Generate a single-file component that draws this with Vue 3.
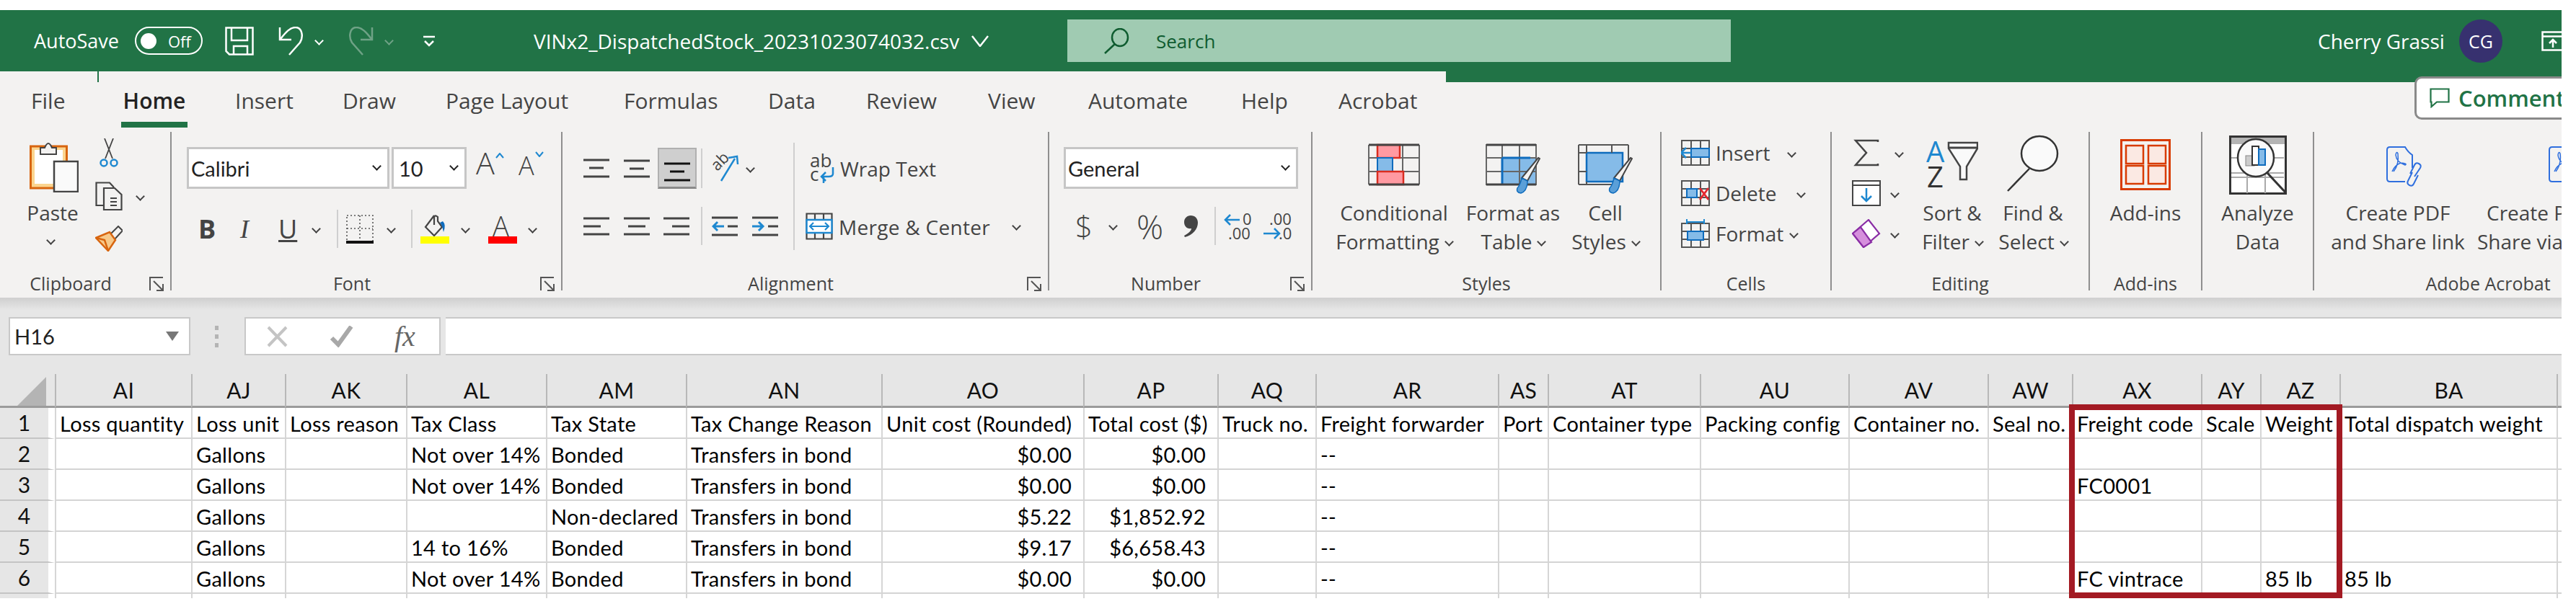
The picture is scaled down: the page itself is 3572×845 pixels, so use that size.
<script setup>
import { computed } from "vue";

const tabs = [
  { name: "File", w: 125 }, { name: "Home", w: 158 }, { name: "Insert", w: 149 }, { name: "Draw", w: 143 },
  { name: "Page Layout", w: 247 }, { name: "Formulas", w: 200 }, { name: "Data", w: 136 }, { name: "Review", w: 169 },
  { name: "View", w: 139 }, { name: "Automate", w: 212 }, { name: "Help", w: 135 }, { name: "Acrobat", w: 120 },
];

const columns = [
  { name: "AI", w: 189, title: "Loss quantity" },
  { name: "AJ", w: 130, title: "Loss unit" },
  { name: "AK", w: 168, title: "Loss reason" },
  { name: "AL", w: 194, title: "Tax Class" },
  { name: "AM", w: 194, title: "Tax State" },
  { name: "AN", w: 271, title: "Tax Change Reason" },
  { name: "AO", w: 280, title: "Unit cost (Rounded)", right: true },
  { name: "AP", w: 186, title: "Total cost ($)", right: true },
  { name: "AQ", w: 136, title: "Truck no." },
  { name: "AR", w: 253, title: "Freight forwarder" },
  { name: "AS", w: 69, title: "Port" },
  { name: "AT", w: 211, title: "Container type" },
  { name: "AU", w: 206, title: "Packing config" },
  { name: "AV", w: 193, title: "Container no." },
  { name: "AW", w: 117, title: "Seal no." },
  { name: "AX", w: 179, title: "Freight code" },
  { name: "AY", w: 82, title: "Scale" },
  { name: "AZ", w: 110, title: "Weight" },
  { name: "BA", w: 301, title: "Total dispatch weight" },
  { name: "", w: 7, title: "" },
];

const rows = [
  { AJ: "Gallons", AL: "Not over 14%", AM: "Bonded", AN: "Transfers in bond", AO: "$0.00", AP: "$0.00", AR: "--" },
  { AJ: "Gallons", AL: "Not over 14%", AM: "Bonded", AN: "Transfers in bond", AO: "$0.00", AP: "$0.00", AR: "--", AX: "FC0001" },
  { AJ: "Gallons", AM: "Non-declared", AN: "Transfers in bond", AO: "$5.22", AP: "$1,852.92", AR: "--" },
  { AJ: "Gallons", AL: "14 to 16%", AM: "Bonded", AN: "Transfers in bond", AO: "$9.17", AP: "$6,658.43", AR: "--" },
  { AJ: "Gallons", AL: "Not over 14%", AM: "Bonded", AN: "Transfers in bond", AO: "$0.00", AP: "$0.00", AR: "--", AX: "FC vintrace", AZ: "85 lb", BA: "85 lb" },
];

const gridColumns = computed(() => "76px " + columns.map((c) => c.w + "px").join(" "));
</script>

<template>
  <div class="window">
    <!-- title bar -->
    <div class="titlebar">
      <span class="t-auto">AutoSave</span>
      <div class="t-toggle-wrap">
        <div class="toggle"><i class="knob"></i><span>Off</span></div>
      </div>
      <svg class="t-save" width="40" height="40" viewBox="0 0 40 40" fill="none" stroke="#fff" stroke-width="2.5">
        <path d="M1.5 1.5H38.5V38.5H6L1.5 34Z" />
        <path d="M9 1.5V19H31V1.5M12 38V27H31V38" />
      </svg>
      <svg class="t-undo" width="36" height="40" viewBox="0 0 36 40" fill="none" stroke="#fff" stroke-width="2.5">
        <path d="M2 1V18H18" />
        <path d="M3 17C10 8 16 1 24 1C33 1 35 14 30 22L15 39" />
      </svg>
      <i class="chev light t-c1"></i>
      <svg class="t-redo" width="36" height="40" viewBox="0 0 36 40" fill="none" stroke="#6fa286" stroke-width="2.5">
        <path d="M34 1V18H18" />
        <path d="M33 17C26 8 20 1 12 1C3 1 1 14 6 22L21 39" />
      </svg>
      <i class="chev dim t-c2"></i>
      <svg class="t-custom" width="16" height="16" viewBox="0 0 16 16" fill="none" stroke="#fff" stroke-width="2.5">
        <path d="M0 2H16M2 8L8 14L14 8" />
      </svg>
      <span class="t-file">VINx2_DispatchedStock_20231023074032.csv</span>
      <svg class="t-filechev" width="24" height="16" viewBox="0 0 24 16" fill="none" stroke="#fff" stroke-width="2.5">
        <path d="M1 1L12 15L23 1" />
      </svg>
      <div class="search">
        <svg width="36" height="36" viewBox="0 0 36 36" fill="none" stroke="#0f5c30" stroke-width="2.5">
          <ellipse cx="23" cy="13" rx="11" ry="12" />
          <path d="M16 22L2 35" />
        </svg>
        <span>Search</span>
      </div>
      <span class="t-user">Cherry Grassi</span>
      <div class="avatar">CG</div>
      <svg class="t-share" width="40" height="28" viewBox="0 0 40 28" fill="none" stroke="#fff" stroke-width="2.5">
        <path d="M1.5 1.5H38.5V26.5H1.5ZM1.5 7.5H38.5" />
        <path d="M16 23V12M11 17L16 12L21 17" />
      </svg>
    </div>

    <!-- ribbon -->
    <div class="ribbon">
      <i class="notch-line"></i>
      <i class="notch"></i>
      <div class="comments">
        <svg width="28" height="28" viewBox="0 0 28 28" fill="none" stroke="#217346" stroke-width="2.2">
          <path d="M1.5 1.5H26.5V19.5H10L2.5 26V19.5H1.5Z" />
        </svg>
        <span>Comments</span>
      </div>

      <nav class="tabs">
        <div v-for="t in tabs" :key="t.name" class="tab" :style="{ width: t.w + 'px' }">
          <span :class="{ active: t.name === 'Home' }">{{ t.name }}</span>
        </div>
      </nav>

      <div class="groups">
        <!-- clipboard -->
        <section class="group g-clip">
          <div class="body clip-body">
            <div class="paste">
              <svg width="68" height="74" viewBox="0 0 68 74">
                <rect x="1.5" y="10" width="50" height="58" fill="#fbd58f" stroke="#d8650f" stroke-width="3" />
                <rect x="7" y="15" width="39" height="47" fill="#fff" />
                <path d="M15 21V12H21Q26 0 31 12H37V21Z" fill="#f3f2f1" stroke="#444" stroke-width="2" />
                <rect x="34" y="31" width="33" height="42" fill="#fafafa" stroke="#444" stroke-width="2.5" />
              </svg>
              <span class="btn-text">Paste</span>
              <i class="chev"></i>
            </div>
            <div class="clip-tools">
              <svg class="cut" width="28" height="40" viewBox="0 0 28 40" fill="none">
                <path d="M8 0L19 28M20 0L9 28" stroke="#444" stroke-width="1.8" />
                <circle cx="7" cy="34" r="4.5" stroke="#1e88d0" stroke-width="2.5" />
                <circle cx="21" cy="34" r="4.5" stroke="#1e88d0" stroke-width="2.5" />
              </svg>
              <div class="copy-row">
                <svg width="38" height="40" viewBox="0 0 38 40" fill="none" stroke="#444" stroke-width="2.2">
                  <path d="M14 33H1.5V1.5H20L26 8" />
                  <path d="M12 9H27L36.5 18V39H12Z" fill="#f3f2f1" />
                  <path d="M21 23H30M21 28H30M21 33H30" />
                </svg>
                <i class="chev"></i>
              </div>
              <svg class="painter" width="38" height="36" viewBox="0 0 38 36" fill="none">
                <path d="M20 13L32 1L38 7L26 20Z" fill="#f3f2f1" stroke="#444" stroke-width="2" />
                <path d="M1 17L20 9L28 20L18 35Z" fill="#f7c98a" stroke="#d8650f" stroke-width="2.5" />
                <path d="M1 17L13 20L18 35" stroke="#d8650f" stroke-width="2.5" />
              </svg>
            </div>
          </div>
          <footer class="foot launch">
            <span>Clipboard</span>
            <svg class="launcher" width="20" height="20" viewBox="0 0 20 20" fill="none" stroke="#555" stroke-width="2">
              <path d="M1 19V1H19M6 6L19 19M19 10V19H10" />
            </svg>
          </footer>
        </section>

        <!-- font -->
        <section class="group g-font">
          <div class="body">
            <div class="font-row1">
              <div class="combo name-combo"><span>Calibri</span><i class="chev dark"></i></div>
              <div class="combo size-combo"><span>10</span><i class="chev dark"></i></div>
              <div class="grow-a big-a">A<svg width="12" height="8" viewBox="0 0 12 8" fill="none" stroke="#1e88d0" stroke-width="2"><path d="M1 7L6 1L11 7" /></svg></div>
              <div class="grow-a small-a">A<svg width="12" height="8" viewBox="0 0 12 8" fill="none" stroke="#1e88d0" stroke-width="2"><path d="M1 1L6 7L11 1" /></svg></div>
            </div>
            <div class="font-row2">
              <b class="fmt">B</b>
              <i class="fmt fmt-i">I</i>
              <u class="fmt fmt-u">U</u>
              <i class="chev"></i>
              <i class="vsep"></i>
              <svg width="38" height="40" viewBox="0 0 38 40" fill="none">
                <path d="M1 1H37V37H1ZM19 1V37M1 19H37" stroke="#555" stroke-width="1.6" stroke-dasharray="2 3" />
                <path d="M0 38H38" stroke="#111" stroke-width="4" />
              </svg>
              <i class="chev"></i>
              <i class="vsep"></i>
              <div class="color-btn">
                <svg width="38" height="30" viewBox="0 0 38 30" fill="none">
                  <path d="M19 1L7 17L19 29L30 17L24 9V3Q19 -1 19 5V14" stroke="#444" stroke-width="2.2" />
                  <path d="M31 9Q36 14 32 24Q30 14 27 11Z" fill="#0f6cbd" />
                </svg>
                <i class="bar yellow"></i>
              </div>
              <i class="chev"></i>
              <div class="color-btn">
                <span class="a-letter">A</span>
                <i class="bar red"></i>
              </div>
              <i class="chev"></i>
            </div>
          </div>
          <footer class="foot launch">
            <span>Font</span>
            <svg class="launcher" width="20" height="20" viewBox="0 0 20 20" fill="none" stroke="#555" stroke-width="2">
              <path d="M1 19V1H19M6 6L19 19M19 10V19H10" />
            </svg>
          </footer>
        </section>

        <!-- alignment -->
        <section class="group g-align">
          <div class="body align-body">
            <div class="align-left">
              <div class="al-row1">
                <svg width="36" height="28" viewBox="0 0 36 28" stroke="#444" stroke-width="3"><path d="M0 2H36M8 13H28M0 25H36" /></svg>
                <svg width="36" height="28" viewBox="0 0 36 28" stroke="#444" stroke-width="3"><path d="M0 3H36M8 14H28M0 25H36" /></svg>
                <div class="al-selected">
                  <svg width="36" height="28" viewBox="0 0 36 28" stroke="#111" stroke-width="3"><path d="M0 2H36M8 13H28M0 25H36" /></svg>
                </div>
                <i class="vsep short"></i>
                <svg class="over" width="40" height="38" viewBox="0 0 40 38" fill="none">
                  <text x="3" y="18" class="svg-txt" transform="rotate(-45 12 14)">ab</text>
                  <path d="M14 36L33 5M24 4L36 2L37 13" stroke="#1e88d0" stroke-width="2.5" />
                </svg>
                <i class="chev"></i>
              </div>
              <div class="al-row2">
                <svg width="36" height="28" viewBox="0 0 36 28" stroke="#444" stroke-width="3"><path d="M0 3H36M0 14H24M0 25H36" /></svg>
                <svg width="36" height="28" viewBox="0 0 36 28" stroke="#444" stroke-width="3"><path d="M0 3H36M6 14H30M0 25H36" /></svg>
                <svg width="36" height="28" viewBox="0 0 36 28" stroke="#444" stroke-width="3"><path d="M0 3H36M12 14H36M0 25H36" /></svg>
                <i class="vsep"></i>
                <svg width="36" height="28" viewBox="0 0 36 28" fill="none" stroke-width="3">
                  <path d="M0 2H36M22 14H36M0 26H36" stroke="#444" />
                  <path d="M17 14H2M8 8L2 14L8 20" stroke="#1e88d0" />
                </svg>
                <svg width="36" height="28" viewBox="0 0 36 28" fill="none" stroke-width="3">
                  <path d="M0 2H36M22 14H36M0 26H36" stroke="#444" />
                  <path d="M0 14H15M9 8L15 14L9 20" stroke="#1e88d0" />
                </svg>
              </div>
            </div>
            <i class="align-sep"></i>
            <div class="align-right">
              <div class="wrap-btn">
                <svg class="over" width="36" height="44" viewBox="0 0 36 44" fill="none">
                  <text x="0" y="20" class="svg-txt big-txt">ab</text>
                  <text x="0" y="39" class="svg-txt big-txt">c</text>
                  <path d="M32 20V29Q32 33 26 33H17M22 27L16 33L22 39M19 33V42" stroke="#1e88d0" stroke-width="2.5" />
                </svg>
                <span class="btn-text">Wrap Text</span>
              </div>
              <div class="merge-btn">
                <svg width="38" height="38" viewBox="0 0 38 38" fill="none">
                  <path d="M1.5 1.5H36.5V36.5H1.5ZM13 1.5V10M25 1.5V10M13 28V36.5M25 28V36.5M1.5 10H36.5M1.5 28H36.5" stroke="#444" stroke-width="2.2" />
                  <rect x="1.5" y="10" width="35" height="18" fill="#fff" stroke="#1e88d0" stroke-width="2.5" />
                  <path d="M6 19H32M11 14L6 19L11 24M27 14L32 19L27 24" stroke="#1e88d0" stroke-width="2.2" />
                </svg>
                <span class="btn-text merge-text">Merge &amp; Center</span>
                <i class="chev"></i>
              </div>
            </div>
          </div>
          <footer class="foot launch">
            <span>Alignment</span>
            <svg class="launcher" width="20" height="20" viewBox="0 0 20 20" fill="none" stroke="#555" stroke-width="2">
              <path d="M1 19V1H19M6 6L19 19M19 10V19H10" />
            </svg>
          </footer>
        </section>

        <!-- number -->
        <section class="group g-number">
          <div class="body">
            <div class="combo general-combo"><span>General</span><i class="chev dark"></i></div>
            <div class="num-row">
              <span class="num-glyph dollar">$</span>
              <i class="chev"></i>
              <span class="num-glyph">%</span>
              <svg width="20" height="32" viewBox="0 0 20 32"><path d="M10 1C16 1 20 5 20 11C20 20 13 28 2 31L1 29C7 26 11 22 11 19C5 20 1 16 1 10C1 5 5 1 10 1Z" fill="#444" /></svg>
              <i class="vsep"></i>
              <svg class="over" width="40" height="38" viewBox="0 0 40 38">
                <text x="26" y="17" class="svg-txt">0</text>
                <text x="6" y="37" class="svg-txt">.00</text>
                <path d="M22 10H3M9 3L2 10L9 17" fill="none" stroke="#1e88d0" stroke-width="2.5" />
              </svg>
              <svg class="over" width="40" height="38" viewBox="0 0 40 38">
                <text x="8" y="17" class="svg-txt">.00</text>
                <text x="21" y="37" class="svg-txt">.0</text>
                <path d="M0 29H21M15 22L22 29L15 36" fill="none" stroke="#1e88d0" stroke-width="2.5" />
              </svg>
            </div>
          </div>
          <footer class="foot launch">
            <span>Number</span>
            <svg class="launcher" width="20" height="20" viewBox="0 0 20 20" fill="none" stroke="#555" stroke-width="2">
              <path d="M1 19V1H19M6 6L19 19M19 10V19H10" />
            </svg>
          </footer>
        </section>

        <!-- styles -->
        <section class="group g-styles">
          <div class="body big-row">
            <div class="big w-cond">
              <svg width="72" height="92" viewBox="0 0 72 92" fill="none">
                <path d="M1 18H71M1 73H71M1 18V73M71 18V73M24 18V73M48 18V73M1 36H71M1 55H71" stroke="#666" stroke-width="2" />
                <rect x="13" y="18" width="31" height="18" fill="#ff9aa2" stroke="#d92d20" stroke-width="2.5" />
                <rect x="13" y="36" width="21" height="19" fill="#85bbe8" stroke="#0f6cbd" stroke-width="2" />
                <rect x="13" y="55" width="36" height="18" fill="#ff9aa2" stroke="#d92d20" stroke-width="2.5" />
                <path d="M1 18H71M1 73H71" stroke="#444" stroke-width="3" />
              </svg>
              <span class="btn-text">Conditional</span>
              <span class="btn-text">Formatting<i class="chev tiny"></i></span>
            </div>
            <div class="big w-fmt">
              <svg width="76" height="92" viewBox="0 0 76 92" fill="none">
                <rect x="23" y="36" width="47" height="37" fill="#85bbe8" />
                <path d="M1 18H70V73H1ZM23 18V73M47 18V73M1 36H70M1 55H70" stroke="#666" stroke-width="2" />
                <path d="M23 36H62M23 36V73" stroke="#0f6cbd" stroke-width="3" />
                <path d="M1 18H70M1 73H70" stroke="#444" stroke-width="3" />
                <path d="M73 36L75 37L58 68L50 64Z" fill="#f3f2f1" stroke="#444" stroke-width="2" />
                <path d="M50 64L58 68Q58 82 49 85Q42 84 44 78Q48 74 50 64Z" fill="#5a9fd8" stroke="#0f6cbd" stroke-width="1.5" />
              </svg>
              <span class="btn-text">Format as</span>
              <span class="btn-text">Table<i class="chev tiny"></i></span>
            </div>
            <div class="big w-cell">
              <svg width="76" height="92" viewBox="0 0 76 92" fill="none">
                <rect x="12" y="29" width="50" height="40" fill="#85bbe8" stroke="#0f6cbd" stroke-width="2.5" />
                <path d="M1 18H70M1 18V73M1 73H50M12 18V29M47 18V29M1 29H12M1 55H12M12 69V73M70 18V40" stroke="#555" stroke-width="2" />
                <path d="M73 36L75 37L58 68L50 64Z" fill="#f3f2f1" stroke="#444" stroke-width="2" />
                <path d="M50 64L58 68Q58 82 49 85Q42 84 44 78Q48 74 50 64Z" fill="#5a9fd8" stroke="#0f6cbd" stroke-width="1.5" />
              </svg>
              <span class="btn-text">Cell</span>
              <span class="btn-text">Styles<i class="chev tiny"></i></span>
            </div>
          </div>
          <footer class="foot"><span>Styles</span></footer>
        </section>

        <!-- cells -->
        <section class="group g-cells">
          <div class="body cells-body">
            <div class="cell-btn">
              <svg width="40" height="36" viewBox="0 0 40 36" fill="none">
                <path d="M1 1H39V35H1ZM14 1V35M27 1V35M1 12H39M1 24H39" stroke="#555" stroke-width="2" />
                <rect x="14" y="12" width="25" height="12" fill="#85bbe8" stroke="#0f6cbd" stroke-width="2" />
                <path d="M14 18H1M7 11L0 18L7 25" stroke="#1e88d0" stroke-width="2.5" fill="#f3f2f1" />
              </svg>
              <span class="btn-text lb-insert">Insert</span><i class="chev"></i>
            </div>
            <div class="cell-btn">
              <svg width="40" height="36" viewBox="0 0 40 36" fill="none">
                <path d="M1 1H39V35H1ZM14 1V35M27 1V35M1 12H39M1 24H39" stroke="#555" stroke-width="2" />
                <rect x="8" y="12" width="14" height="12" fill="#85bbe8" stroke="#0f6cbd" stroke-width="2" />
                <path d="M26 11L38 27M38 11L26 27" stroke="#e5262e" stroke-width="2.8" />
              </svg>
              <span class="btn-text lb-delete">Delete</span><i class="chev"></i>
            </div>
            <div class="cell-btn">
              <svg width="40" height="40" viewBox="0 0 40 40" fill="none">
                <path d="M1 6H39V39H1ZM14 6V39M27 6V39M1 17H39M1 28H39" stroke="#555" stroke-width="2" />
                <rect x="9" y="17" width="22" height="12" fill="#85bbe8" stroke="#0f6cbd" stroke-width="2" />
                <path d="M8 4H32M8 0V7M32 0V7" stroke="#1e88d0" stroke-width="2" />
              </svg>
              <span class="btn-text lb-format">Format</span><i class="chev"></i>
            </div>
          </div>
          <footer class="foot"><span>Cells</span></footer>
        </section>

        <!-- editing -->
        <section class="group g-edit">
          <div class="body big-row">
            <div class="edit-left">
              <div class="edit-tool">
                <svg width="40" height="38" viewBox="0 0 40 38" fill="none" stroke="#444" stroke-width="2.5">
                  <path d="M36 4V2H5L20 19L5 36H36V34" />
                </svg>
                <i class="chev sum"></i>
              </div>
              <div class="edit-tool">
                <svg width="40" height="36" viewBox="0 0 40 36" fill="none">
                  <rect x="1" y="1" width="38" height="34" fill="#fff" stroke="#444" stroke-width="2" />
                  <path d="M1 7H39" stroke="#444" stroke-width="2" />
                  <path d="M20 11V29M13 22L20 29L27 22" stroke="#1e88d0" stroke-width="2.5" />
                </svg>
                <i class="chev"></i>
              </div>
              <div class="edit-tool">
                <svg width="40" height="40" viewBox="0 0 40 40" fill="none">
                  <path d="M23 1L38 20L16 39L1 20Z" fill="#fff" stroke="#8a2da5" stroke-width="2.2" />
                  <path d="M1 20L12 11L27 32L16 39Z" fill="#d58fdc" stroke="#8a2da5" stroke-width="2.2" />
                </svg>
                <i class="chev"></i>
              </div>
            </div>
            <div class="big w-sort">
              <svg width="72" height="92" viewBox="0 0 72 92" fill="none">
                <text x="0" y="42" class="az blue">A</text>
                <text x="1" y="77" class="az">Z</text>
                <path d="M31 15H71V23L56 48V66H47V48L31 23Z" fill="#fafafa" stroke="#444" stroke-width="2.5" />
                <path d="M31 22H71" stroke="#444" stroke-width="3" />
              </svg>
              <span class="btn-text">Sort &amp;</span>
              <span class="btn-text">Filter<i class="chev tiny"></i></span>
            </div>
            <div class="big w-find">
              <svg width="74" height="92" viewBox="0 0 74 92" fill="none" stroke="#333" stroke-width="2.5">
                <ellipse cx="46" cy="30" rx="25" ry="24" fill="#fafafa" />
                <path d="M32 51L2 82" />
              </svg>
              <span class="btn-text">Find &amp;</span>
              <span class="btn-text">Select<i class="chev tiny"></i></span>
            </div>
          </div>
          <footer class="foot"><span>Editing</span></footer>
        </section>

        <!-- add-ins -->
        <section class="group g-addins">
          <div class="body big-row">
            <div class="big w-full">
              <svg width="70" height="92" viewBox="0 0 70 92" fill="none" stroke="#d83b01">
                <rect x="1.5" y="11.5" width="67" height="68" stroke-width="3" />
                <rect x="8" y="19" width="24" height="25" stroke-width="2.5" fill="#fbe9e3" />
                <rect x="39" y="19" width="24" height="25" stroke-width="2.5" fill="#fbe9e3" />
                <rect x="8" y="47" width="24" height="25" stroke-width="2.5" fill="#fbe9e3" />
                <rect x="39" y="47" width="24" height="25" stroke-width="2.5" fill="#fbe9e3" />
              </svg>
              <span class="btn-text">Add-ins</span>
            </div>
          </div>
          <footer class="foot"><span>Add-ins</span></footer>
        </section>

        <!-- analyze -->
        <section class="group g-analyze">
          <div class="body big-row">
            <div class="big w-full">
              <svg width="80" height="92" viewBox="0 0 80 92" fill="none">
                <rect x="1.5" y="6.5" width="77" height="79" fill="#fff" stroke="#333" stroke-width="3" />
                <rect x="3" y="8" width="74" height="9" fill="#b5b5b5" />
                <path d="M3 36H76M3 57H76M3 63H76M25 57V85M50 57V85" stroke="#aaa" stroke-width="2" />
                <ellipse cx="37" cy="36" rx="25" ry="26" fill="#fafafa" stroke="#333" stroke-width="2.5" />
                <rect x="23" y="33" width="12" height="14" fill="#ccc" stroke="#888" />
                <rect x="32" y="20" width="9" height="26" fill="#fff" stroke="#333" stroke-width="2" />
                <rect x="41" y="24" width="9" height="22" fill="#85bbe8" stroke="#0f6cbd" stroke-width="2" />
                <path d="M53 57L79 85" stroke="#333" stroke-width="3" />
              </svg>
              <span class="btn-text">Analyze</span>
              <span class="btn-text">Data</span>
            </div>
          </div>
        </section>

        <!-- acrobat -->
        <section class="group g-acro">
          <div class="body big-row">
            <div class="big w-acro1">
              <svg width="50" height="92" viewBox="0 0 50 92" fill="none" stroke="#2f6fde" stroke-width="2">
                <path d="M26 69H5Q1 69 1 65V25Q1 21 5 21H26Q30 28 36 32V50" />
                <path d="M10 55Q18 45 16 30Q14 26 13 32Q14 42 26 46Q30 44 20 43Q12 46 8 55" stroke-width="1.5" />
                <path d="M36 56L30 68Q28 72 32 74Q36 76 38 72L44 60M39 62L47 50Q49 46 45 44Q41 42 39 46L33 58" />
              </svg>
              <span class="btn-text">Create PDF</span>
              <span class="btn-text">and Share link</span>
            </div>
            <div class="big w-acro2">
              <svg width="50" height="92" viewBox="0 0 50 92" fill="none" stroke="#2f6fde" stroke-width="2">
                <path d="M26 69H5Q1 69 1 65V25Q1 21 5 21H26Q30 28 36 32V69" />
                <path d="M10 55Q18 45 16 30Q14 26 13 32Q14 42 26 46Q30 44 20 43Q12 46 8 55" stroke-width="1.5" />
              </svg>
              <span class="btn-text acro-line1">Create PDF</span>
              <span class="btn-text">Share via</span>
            </div>
          </div>
          <footer class="foot"><span>Adobe Acrobat</span></footer>
        </section>
      </div>
    </div>

    <div class="ribbon-shadow"></div>

    <!-- formula bar -->
    <div class="formula">
      <div class="namebox"><span>H16</span><i class="tri"></i></div>
      <div class="dots"><i></i><i></i><i></i></div>
      <div class="fx-box">
        <svg width="32" height="30" viewBox="0 0 32 30" fill="none" stroke="#c4c4c4"><path d="M3 2L28 28M28 2L3 28" stroke-width="4" /></svg>
        <svg width="34" height="30" viewBox="0 0 34 30" fill="none" stroke="#a8a8a8" stroke-width="6"><path d="M3 17L12 26L30 1" /></svg>
        <span class="fx">fx</span>
      </div>
      <div class="fbar"></div>
    </div>

    <!-- sheet -->
    <div class="sheet">
      <div class="grid" :style="{ gridTemplateColumns: gridColumns }">
        <div class="corner"><svg width="42" height="40" viewBox="0 0 42 40"><path d="M40 0V40H0Z" fill="#b4b4b4" /></svg></div>
        <div v-for="c in columns" :key="'h' + c.name" class="colhead">{{ c.name }}</div>

        <div class="rowhead">1</div>
        <div v-for="c in columns" :key="'t' + c.name" class="cell">{{ c.title }}</div>

        <template v-for="(row, i) in rows" :key="i">
          <div class="rowhead">{{ i + 2 }}</div>
          <div v-for="c in columns" :key="c.name" class="cell" :class="{ right: c.right }">{{ row[c.name] }}</div>
        </template>

        <div class="rowhead stub"></div>
        <div v-for="c in columns" :key="'s' + c.name" class="cell stub"></div>
      </div>
      <div class="highlight"></div>
    </div>
  </div>
</template>

<style scoped>
.window {
  width: 3552px;
  height: 830px;
  margin-top: 14px;
  overflow: hidden;
  position: relative;
  font-family: "Open Sans", sans-serif;
  color: #444;
}

/* title bar */
.titlebar {
  height: 85px;
  background: #217346;
  color: #fff;
  display: flex;
  align-items: center;
  padding-left: 47px;
  font-size: 27px;
}
.titlebar > * { flex-shrink: 0; }
.t-auto { width: 140px; white-space: nowrap; font-size: 27px; }
.t-toggle-wrap { width: 125px; }
.toggle {
  width: 94px;
  height: 39px;
  box-sizing: border-box;
  border: 2.5px solid #fff;
  border-radius: 20px;
  display: flex;
  align-items: center;
  padding-left: 6px;
  font-size: 22px;
}
.knob { width: 22px; height: 22px; border-radius: 50%; background: #fff; margin-right: 16px; }
.t-save { margin-right: 34px; }
.t-undo { margin-right: 16px; }
.t-c1 { margin-right: 35px; }
.t-redo { margin-right: 17px; }
.t-c2 { margin-right: 43px; }
.t-custom { margin-right: 137px; }
.t-file { width: 607px; white-space: nowrap; font-size: 28px; }
.t-filechev { margin-right: 109px; }
.search {
  width: 920px;
  height: 59px;
  background: #a0cbb2;
  display: flex;
  align-items: center;
  color: #0f5c30;
  padding-left: 50px;
  box-sizing: border-box;
  font-size: 26px;
}
.search span { margin-left: 37px; }
.t-user { margin-left: 814px; width: 196px; white-space: nowrap; font-size: 28px; }
.avatar {
  width: 60px;
  height: 60px;
  border-radius: 50%;
  background: #37316f;
  display: flex;
  align-items: center;
  justify-content: center;
  font-size: 25px;
  margin-right: 54px;
}

/* ribbon */
.ribbon {
  height: 314px;
  background: #f3f2f1;
  position: relative;
}
.notch { position: absolute; top: 0; right: 0; width: 1547px; height: 15px; background: #217346; }
.notch-line { position: absolute; top: 0; left: 135px; width: 2px; height: 15px; background: #217346; }
.comments {
  position: absolute;
  top: 7px;
  left: 3348px;
  width: 300px;
  height: 60px;
  box-sizing: border-box;
  border: 3px solid #8a8a8a;
  border-radius: 10px;
  background: #fff;
  display: flex;
  align-items: center;
  padding-left: 18px;
  color: #217346;
  font-size: 31px;
  font-weight: 600;
  z-index: 2;
}
.comments span { margin-left: 12px; }
.tabs {
  height: 84px;
  display: flex;
  padding-left: 43px;
  font-size: 30px;
  align-items: flex-start;
}
.tab { flex-shrink: 0; padding-top: 20px; line-height: 42px; white-space: nowrap; }
.tab .active {
  display: inline-block;
  min-width: 92px;
  text-align: center;
  color: #222;
  font-weight: 600;
  height: 50px;
  border-bottom: 8px solid #217346;
}

.groups { display: flex; height: 220px; }
.group {
  flex-shrink: 0;
  height: 220px;
  box-sizing: border-box;
  border-right: 2px solid #8f8f8f;
  display: flex;
  flex-direction: column;
}
.body { height: 200px; }
.foot {
  height: 20px;
  line-height: 20px;
  font-size: 25px;
  display: flex;
  justify-content: center;
  white-space: nowrap;
}
.launch { justify-content: flex-start; }
.launch span { flex: 1; text-align: center; }
.launcher { flex: none; margin-right: 9px; margin-left: 11px; margin-top: 1px; }

.g-clip { width: 238px; }
.g-font { width: 542px; }
.g-align { width: 675px; }
.g-number { width: 365px; }
.g-styles { width: 484px; }
.g-cells { width: 236px; }
.g-edit { width: 358px; }
.g-addins { width: 156px; }
.g-analyze { width: 155px; }
.g-acro { width: 482px; border-right: none; }

.btn-text {
  font-size: 28px;
  line-height: 40px;
  white-space: nowrap;
}

.chev {
  display: inline-block;
  width: 9px;
  height: 9px;
  box-sizing: border-box;
  border-right: 2.4px solid #444;
  border-bottom: 2.4px solid #444;
  transform: rotate(45deg);
  flex: none;
}
.chev.light { border-color: #fff; }
.chev.dim { border-color: #6fa286; }
.chev.dark { border-color: #222; }
.chev.tiny { margin: 0 0 6px 9px; vertical-align: middle; }
svg.over { overflow: visible; }

/* clipboard */
.clip-body { display: flex; padding-left: 38px; }
.paste { width: 74px; display: flex; flex-direction: column; align-items: center; padding-top: 10px; }
.paste .btn-text { margin-top: 8px; margin-right: 4px; }
.paste .chev { margin-top: 14px; margin-right: 10px; }
.clip-tools { margin-left: 20px; padding-top: 9px; display: flex; flex-direction: column; }
.cut { margin-left: 5px; display: block; }
.copy-row { display: flex; align-items: center; margin-top: 20px; }
.copy-row .chev { margin-left: 20px; }
.painter { margin-top: 21px; display: block; }

/* font */
.font-row1 { display: flex; padding: 21px 0 0 21px; height: 58px; }
.combo {
  height: 58px;
  box-sizing: border-box;
  border: 3px solid #c6c6c6;
  background: #fff;
  display: flex;
  align-items: center;
  justify-content: space-between;
  padding: 0 10px 0 3px;
  color: #222;
  font-family: "Lato", sans-serif;
  font-size: 29px;
  flex: none;
}
.combo .chev { margin-bottom: 5px; }
.name-combo { width: 281px; margin-right: 3px; }
.size-combo { width: 104px; padding-left: 7px; }
.grow-a { display: flex; align-items: flex-start; color: #444; line-height: 1; }
.big-a { font-size: 43px; margin-left: 13px; width: 59px; font-weight: 300; }
.small-a { font-size: 36px; padding-top: 8px; width: 36px; font-weight: 300; }
.big-a svg { margin-top: 8px; margin-left: 1px; }
.small-a svg { margin-top: -2px; margin-left: 1px; }
.font-row2 {
  display: grid;
  grid-template-columns: 58px 53px 48px 33px 13px 58px 32px 13px 58px 36px 57px 20px;
  align-items: center;
  height: 53px;
  margin: 29px 0 0 37px;
}
.fmt { font-size: 36px; color: #444; line-height: 1; font-family: "Open Sans", sans-serif; }
.fmt-i { font-family: "Liberation Serif", serif; font-style: italic; }
.fmt-u { font-weight: 400; }
.vsep { display: block; width: 2px; height: 53px; background: #cfcfcf; }
.vsep.short { height: 55px; }
.color-btn { display: flex; flex-direction: column; align-items: flex-start; width: 40px; }
.bar { display: block; width: 40px; height: 10px; }
.bar.yellow { background: #ffff00; }
.bar.red { background: #ff0000; }
.a-letter { font-size: 38px; line-height: 30px; font-weight: 300; padding-left: 6px; color: #444; }

/* alignment */
.align-body { display: flex; }
.align-left { width: 320px; flex: none; }
.al-row1 {
  display: grid;
  grid-template-columns: 56px 47px 60px 14px 50px auto;
  justify-content: start;
  align-items: center;
  height: 57px;
  margin: 22px 0 0 29px;
}
.al-selected {
  width: 54px;
  height: 57px;
  box-sizing: border-box;
  background: #cfcfcf;
  border: 2px solid #b0b0b0;
  border-bottom: 3px solid #8a8a8a;
  display: flex;
  align-items: flex-end;
  justify-content: center;
  padding-bottom: 6px;
}
.al-row2 {
  display: grid;
  grid-template-columns: 56px 55px 52px 15px 56px auto;
  justify-content: start;
  align-items: center;
  height: 53px;
  margin: 25px 0 0 29px;
}
.svg-txt { font-family: "Open Sans", sans-serif; font-size: 22px; fill: #444; }
.big-txt { font-size: 26px; }
.align-sep {
  display: block;
  flex: none;
  width: 2px;
  height: 149px;
  margin-top: 15px;
  background: #cfcfcf;
}
.align-right { flex: none; }
.wrap-btn {
  display: flex;
  align-items: center;
  height: 57px;
  margin: 22px 0 0 21px;
}
.wrap-btn .btn-text { margin-left: 6px; }
.merge-btn {
  display: flex;
  align-items: center;
  height: 53px;
  margin: 25px 0 0 15px;
}
.merge-text { margin-left: 8px; width: 242px; padding-top: 3px; letter-spacing: 0.3px; }

/* number */
.general-combo { width: 325px; margin: 21px 0 0 20px; padding-left: 3px; }
.num-row {
  display: grid;
  grid-template-columns: 48px 37px 65px 43px 13px 55px auto;
  justify-content: start;
  align-items: center;
  height: 53px;
  margin: 25px 0 0 36px;
}
.num-glyph { font-size: 46px; line-height: 1; font-weight: 300; color: #444; }
.dollar { font-size: 42px; }

/* big buttons */
.big-row { display: flex; }
.big { display: flex; flex-direction: column; align-items: center; flex: none; }
.big svg { flex: none; display: block; }
.w-cond { width: 226px; }
.w-fmt { width: 104px; }
.w-cell { width: 152px; }
.w-sort { width: 112px; }
.w-find { width: 112px; }
.w-full { width: 100%; }
.w-acro1 { width: 232px; }
.w-acro1 svg { margin-left: 18px; }
.w-acro2 { width: 174px; margin-left: -6px; align-items: flex-start; }
.w-acro2 svg { margin-left: 99px; }
.acro-line1 { margin-left: 13px; }

/* cells */
.cells-body { padding: 1px 0 0 27px; }
.cell-btn { height: 56px; display: flex; align-items: center; }
.cell-btn .btn-text { margin-left: 8px; }
.lb-insert { width: 101px; }
.lb-delete { width: 114px; }
.lb-format { width: 104px; }

/* editing */
.edit-left { width: 111px; padding: 1px 0 0 28px; box-sizing: border-box; flex: none; }
.edit-tool { height: 56px; display: flex; align-items: center; }
.edit-tool .chev { margin-left: 15px; }
.edit-tool .chev.sum { margin-left: 21px; }
.az { font-family: "Open Sans", sans-serif; font-size: 40px; fill: #333; }
.az.blue { fill: #1e88d0; }

/* formula bar */
.ribbon-shadow { height: 17px; background: linear-gradient(#cfcfcf, #e6e6e6); }
.formula {
  height: 89px;
  background: #e6e6e6;
  display: flex;
  padding: 10px 0 26px 12px;
  box-sizing: border-box;
}
.namebox {
  width: 252px;
  box-sizing: border-box;
  background: #fff;
  border: 2px solid #c8c8c8;
  display: flex;
  align-items: center;
  justify-content: space-between;
  padding: 0 14px 0 6px;
  font-family: "Lato", sans-serif;
  font-size: 29px;
  color: #222;
}
.tri { width: 0; height: 0; border-left: 9px solid transparent; border-right: 9px solid transparent; border-top: 13px solid #777; }
.dots {
  width: 75px;
  display: flex;
  flex-direction: column;
  align-items: center;
  justify-content: center;
  gap: 6px;
  flex: none;
  padding-right: 2px;
  box-sizing: border-box;
}
.dots i { width: 5px; height: 6px; background: #b4b4b4; }
.fx-box {
  width: 272px;
  box-sizing: border-box;
  background: #fff;
  border: 2px solid #c8c8c8;
  display: flex;
  align-items: center;
  padding-left: 28px;
  gap: 56px;
  flex: none;
}
.fx { font-family: "Liberation Serif", serif; font-style: italic; font-size: 40px; color: #666; line-height: 1; }
.fbar {
  flex: 1;
  margin-left: 7px;
  background: #fff;
  border-top: 2px solid #c8c8c8;
  border-bottom: 2px solid #c8c8c8;
}

/* sheet */
.sheet { position: relative; background: #fff; }
.grid {
  display: grid;
  grid-template-rows: 47px repeat(6, 43px) 6px;
  font-family: "Lato", sans-serif;
  font-size: 29px;
  letter-spacing: 0.3px;
  color: #000;
  background: #fff;
}
.corner {
  background: #e6e6e6;
  border-bottom: 3px solid #9b9b9b;
  box-sizing: border-box;
  padding: 4px 0 0 24px;
}
.colhead {
  background: #e6e6e6;
  border-bottom: 3px solid #9b9b9b;
  border-left: 2px solid #b8b8b8;
  box-sizing: border-box;
  text-align: center;
  font-size: 30px;
  line-height: 44px;
  color: #111;
  overflow: hidden;
}
.rowhead {
  background: #e6e6e6;
  border-right: 9px solid #fff;
  border-bottom: 2px solid #c4c4c4;
  box-sizing: border-box;
  text-align: center;
  font-size: 30px;
  line-height: 41px;
  color: #111;
}
.cell {
  border-left: 2px solid #d6d6d6;
  border-bottom: 2px solid #d4d4d4;
  box-sizing: border-box;
  padding: 0 16px 0 5px;
  line-height: 44px;
  white-space: nowrap;
}
.cell.right { text-align: right; }
.stub { border-bottom: none; }
.highlight {
  position: absolute;
  left: 2869px;
  top: 42px;
  width: 379px;
  height: 269px;
  box-sizing: border-box;
  border: 8px solid #a31a23;
}
</style>

<style>
html, body { margin: 0; background: #fff; overflow: hidden; }
</style>
